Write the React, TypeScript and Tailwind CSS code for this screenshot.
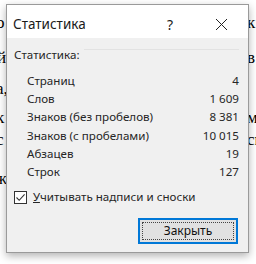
import React from "react";

const rows: [string, string][] = [
  ["Страниц", "4"],
  ["Слов", "1 609"],
  ["Знаков (без пробелов)", "8 381"],
  ["Знаков (с пробелами)", "10 015"],
  ["Абзацев", "19"],
  ["Строк", "127"],
];

export default function App() {
  return (
    <div className="relative w-[256px] h-[264px] overflow-hidden bg-white" style={{ fontFamily: '"Noto Sans", sans-serif' }}>
      {/* document fragments behind the dialog */}
      <div className="absolute inset-0 text-[17px] text-black" style={{ fontFamily: '"Liberation Serif", serif' }}>
        <span className="absolute left-[-4px] top-[10px]">о</span>
        <span className="absolute left-[-3px] top-[45px]">й</span>
        <span className="absolute left-[-4px] top-[76px]">а,</span>
        <span className="absolute left-[-4px] top-[105px]">к</span>
        <span className="absolute left-[-4px] top-[127px]">с</span>
        <span className="absolute left-[-5px] top-[166px]">ж</span>
        <span className="absolute left-[247px] top-[10px]">к</span>
        <span className="absolute left-[247px] top-[45px]">в</span>
        <span className="absolute left-[247px] top-[105px]">м</span>
        <span className="absolute left-[247px] top-[127px]">сн</span>
      </div>

      {/* dialog */}
      <div className="absolute left-[6px] top-[4px] w-[243px] h-[249px] border border-[#9a9a9a] bg-[#f0f0f0] shadow-[0_3px_8px_rgba(0,0,0,0.3)] flex flex-col">
        <div className="h-[33px] bg-white flex items-center pl-[6px] pt-[6px] text-[#1a1a1a]">
          <span className="text-[13.5px] leading-none">Статистика</span>
          <span className="ml-auto mr-[42px] text-[14px] leading-none">?</span>
          <svg width="13" height="13" viewBox="0 0 13 13" className="mr-[20px]">
            <path d="M1 1L12 12M12 1L1 12" stroke="#222" strokeWidth="1" />
          </svg>
        </div>
        <div className="flex flex-col px-[7px] text-[11.6px] text-[#262626]">
          <div className="relative mt-[10px] h-[14px] flex items-center">
            <span className="leading-none bg-[#f0f0f0] pr-1 relative z-10">Статистика:</span>
            <div className="absolute left-0 right-[2px] top-[1px] h-px bg-[#e2e2e2]" />
          </div>
          <div className="flex flex-col mt-[9px] pl-[13px] pr-[2px]">
            {rows.map(([k, v]) => (
              <div key={k} className="h-[18.4px] flex items-center justify-between">
                <span>{k}</span>
                <span>{v}</span>
              </div>
            ))}
          </div>
          <div className="flex items-center mt-[7px] gap-[6px]">
            <div className="w-[13px] h-[13px] border border-[#333] bg-white flex items-center justify-center">
              <svg width="11" height="11" viewBox="0 0 11 11">
                <path d="M1.5 5.5L4.2 8.3L9.6 2.3" fill="none" stroke="#333" strokeWidth="1.1" />
              </svg>
            </div>
            <span><span className="underline">У</span>читывать надписи и сноски</span>
          </div>
          <div className="flex justify-end mt-[12px] pr-[3px]">
            <button className="w-[100px] h-[26px] border-[2px] border-[#0078d7] bg-[#e1e1e1] p-[2px]">
              <div className="w-full h-full border border-dotted border-[#444] flex items-center justify-center text-[12px] text-[#111]">
                Закрыть
              </div>
            </button>
          </div>
        </div>
      </div>
    </div>
  );
}
